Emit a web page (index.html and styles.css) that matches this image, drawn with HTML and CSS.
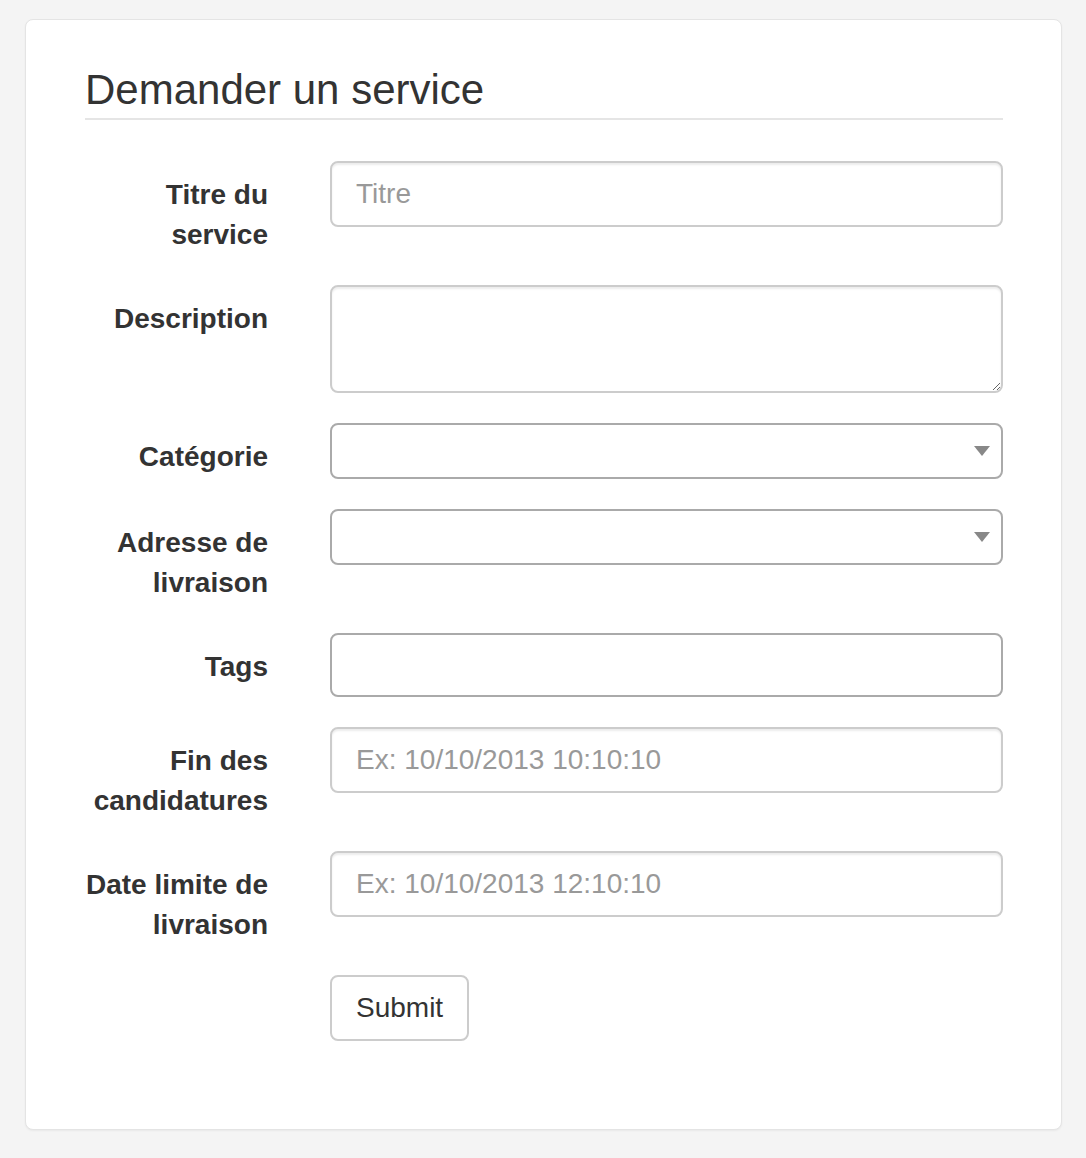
FILE: index.html
```html
<!DOCTYPE html>
<html lang="fr">
<head>
<meta charset="utf-8">
<title>Demander un service</title>
<link rel="stylesheet" href="styles.css">
</head>
<body>
<div class="card">
  <form class="form">
    <h1 class="legend">Demander un service</h1>
    <div class="fields">
      <div class="group">
        <label class="label">Titre du service</label>
        <input class="control" type="text" placeholder="Titre">
      </div>
      <div class="group">
        <label class="label">Description</label>
        <textarea class="control area"></textarea>
      </div>
      <div class="group">
        <label class="label">Catégorie</label>
        <div class="select-wrap"><select class="control select"><option></option></select></div>
      </div>
      <div class="group">
        <label class="label">Adresse de livraison</label>
        <div class="select-wrap"><select class="control select"><option></option></select></div>
      </div>
      <div class="group">
        <label class="label">Tags</label>
        <input class="control tags" type="text">
      </div>
      <div class="group">
        <label class="label">Fin des candidatures</label>
        <input class="control" type="text" placeholder="Ex: 10/10/2013 10:10:10">
      </div>
      <div class="group">
        <label class="label">Date limite de livraison</label>
        <input class="control" type="text" placeholder="Ex: 10/10/2013 12:10:10">
      </div>
      <div class="group">
        <span class="label"></span>
        <div><button type="button" class="btn">Submit</button></div>
      </div>
    </div>
  </form>
</div>
</body>
</html>
```
FILE: styles.css
```css
* { box-sizing: border-box; }
html, body { margin: 0; }
body {
  background: #f4f4f4;
  padding: 19px 24px 28px 25px;
  font-family: "Liberation Sans", Arial, Helvetica, sans-serif;
  color: #333;
}
.card {
  background: #fff;
  border: 1px solid #e4e4e4;
  border-radius: 8px;
  box-shadow: 0 1px 2px rgba(0,0,0,0.05);
  padding: 38px 58px 58px 59px;
}
.form { margin: 0; }
.legend {
  margin: 0 0 41px 0;
  padding-top: 4px;
  font-size: 42px;
  font-weight: normal;
  line-height: 56px;
  color: #333;
  border-bottom: 2px solid #e5e5e5;
}
.fields { margin-left: -17px; }
.group {
  display: grid;
  grid-template-columns: 200px 1fr;
  column-gap: 62px;
  align-items: start;
  margin-bottom: 30px;
}
.label {
  display: block;
  text-align: right;
  font-weight: bold;
  font-size: 28px;
  line-height: 40px;
  padding-top: 14px;
  color: #333;
}
.control {
  display: block;
  width: 100%;
  height: 66px;
  padding: 11px 24px;
  font-family: inherit;
  font-size: 28px;
  line-height: 40px;
  color: #555;
  background: #fff;
  border: 2px solid #ccc;
  border-radius: 8px;
  box-shadow: inset 0 2px 2px rgba(0,0,0,0.075);
  outline: none;
}
.control::placeholder { color: #999; }
.area { height: 108px; resize: vertical; }
.tags { height: 64px; border-color: #aaa; box-shadow: none; }
.select-wrap { position: relative; }
.select {
  -webkit-appearance: none;
  appearance: none;
  height: 56px;
  padding: 6px 24px;
  border-color: #aaa;
  box-shadow: none;
}
.select-wrap::after {
  content: "";
  position: absolute;
  right: 13px;
  top: 23px;
  border-left: 8px solid transparent;
  border-right: 8px solid transparent;
  border-top: 10px solid #888;
  pointer-events: none;
}
.btn {
  display: inline-block;
  height: 66px;
  padding: 11px 24px;
  font-family: inherit;
  font-size: 28px;
  line-height: 40px;
  color: #333;
  background: #fff;
  border: 2px solid #ccc;
  border-radius: 8px;
  cursor: pointer;
}
```
